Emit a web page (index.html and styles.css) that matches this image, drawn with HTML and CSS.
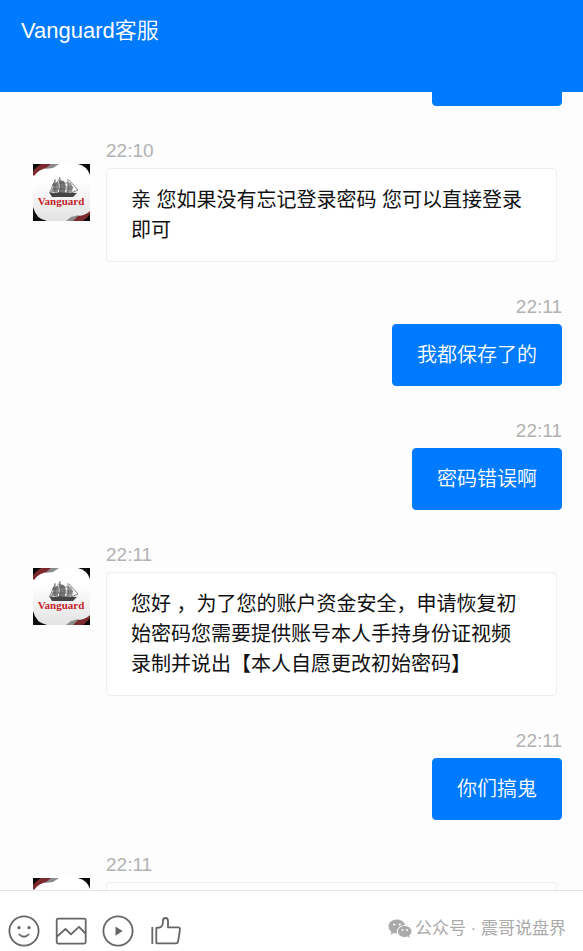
FILE: index.html
```html
<!DOCTYPE html>
<html lang="zh-CN">
<head>
  <meta charset="UTF-8" />
  <meta name="viewport" content="width=device-width, initial-scale=1" />
  <title>Vanguard客服</title>
  <link rel="stylesheet" href="styles.css">
</head>
<body>
  <!-- shared avatar -->
  <svg class="defs" aria-hidden="true">
    <defs>
      <linearGradient id="shade" x1="0" y1="0" x2="0" y2="1">
        <stop offset="0.3" stop-color="#fff" />
        <stop offset="1" stop-color="#e2e2e2" />
      </linearGradient>
    </defs>
    <symbol id="avatar" viewBox="0 0 57 57">
      <rect width="57" height="57" fill="#0a0a0a" />
      <path d="M0 0H45Q54 2 57 11V57H14Q3 55 0 43Z" fill="url(#shade)" />
      <path d="M0 0H12L0 9Z" fill="#0a0a0a" />
      <path d="M0 11V7Q3 3 8 0H19L14 4Q6 5 1 12Z" fill="#7d2a2f" />
      <path d="M18 0H26L20 4 12 5Z" fill="#8b8b8b" />
      <path d="M57 57H47L57 49Z" fill="#0a0a0a" />
      <path d="M57 47V50Q54 54 50 57H39L44 52Q51 52 56 48Z" fill="#7d2a2f" />
      <path d="M40 57H33L38 53 46 51Z" fill="#8b8b8b" />
      <path d="M16 28L21 29 27 28 44 29 40 33H19Z" fill="#444" />
      <path d="M20 19L25 18 26 23 25 28 18 28 20 24Z" fill="#8a8a8a" />
      <path d="M26 16L31 17 33 22 32 28 26 28 27 22Z" fill="#777" />
      <path d="M34 18L38 19 40 24 39 28 33 28 35 23Z" fill="#999" />
      <path d="M22 15V30M27 13V30M35 15V30M36 16L45 26 38 29M22 16L17 28M27 14L23 20M19 21H26M25 19H34M33 23H40M19 25H39" fill="none" stroke="#555" stroke-width="0.7" />
    </symbol>
  </svg>

  <header class="header">
    <h1>Vanguard客服</h1>
  </header>

  <main class="chat">
    <div class="message sent">
      <div class="bubble short"></div>
    </div>

    <div class="message received">
      <svg class="avatar" viewBox="0 0 57 57">
        <use href="#avatar" />
        <text class="avatar-name" x="28" y="41" text-anchor="middle">Vanguard</text>
      </svg>
      <div class="content">
        <time class="time">22:10</time>
        <div class="bubble">亲 您如果没有忘记登录密码 您可以直接登录即可</div>
      </div>
    </div>

    <div class="message sent">
      <time class="time">22:11</time>
      <div class="bubble">我都保存了的</div>
    </div>

    <div class="message sent">
      <time class="time">22:11</time>
      <div class="bubble">密码错误啊</div>
    </div>

    <div class="message received">
      <svg class="avatar" viewBox="0 0 57 57">
        <use href="#avatar" />
        <text class="avatar-name" x="28" y="41" text-anchor="middle">Vanguard</text>
      </svg>
      <div class="content">
        <time class="time">22:11</time>
        <div class="bubble">您好 ，为了您的账户资金安全，申请恢复初始密码您需要提供账号本人手持身份证视频录制并说出【本人自愿更改初始密码】</div>
      </div>
    </div>

    <div class="message sent">
      <time class="time">22:11</time>
      <div class="bubble">你们搞鬼</div>
    </div>

    <div class="message received">
      <svg class="avatar" viewBox="0 0 57 57">
        <use href="#avatar" />
      </svg>
      <div class="content">
        <time class="time">22:11</time>
        <div class="bubble"></div>
      </div>
    </div>
  </main>

  <footer class="toolbar">
    <div class="tools">
      <button class="tool" type="button" aria-label="表情">
        <svg viewBox="0 0 32 32">
          <circle cx="16" cy="16" r="14.6" />
          <path d="M10.8 19Q16 24.5 21.2 19" />
          <circle class="solid" cx="11" cy="12.7" r="1.6" />
          <circle class="solid" cx="21" cy="12.7" r="1.6" />
        </svg>
      </button>
      <button class="tool" type="button" aria-label="图片">
        <svg viewBox="0 0 32 32">
          <rect x="1.7" y="3.6" width="29" height="25" rx="1.5" />
          <path d="M2 21.5L10.5 14 16 19.3 24 11.8 30.5 18.5" />
        </svg>
      </button>
      <button class="tool" type="button" aria-label="视频">
        <svg viewBox="0 0 32 32">
          <circle cx="16" cy="16" r="14.6" />
          <path class="solid" d="M13.5 11.4V20.8L20.6 16.1Z" />
        </svg>
      </button>
      <button class="tool" type="button" aria-label="点赞">
        <svg viewBox="0 0 32 32">
          <path d="M3.3 12V29M7.3 12.8V28.3H27Q28.8 28.3 29.1 26.5L31 14.5Q31 12.3 29 12.3H19V5.6Q19 3 16.5 3 14 3 14 5.6 14 12.3 10.5 12.5Z" />
        </svg>
      </button>
    </div>
    <div class="account">
      <svg class="wechat" viewBox="0 0 24 19" aria-hidden="true">
        <path d="M9 0.5C4 0.5 0.5 3.6 0.5 7.5 0.5 9.8 1.7 11.5 3.4 12.8L2.7 15.5 5.8 14Q7.3 14.4 9 14.4C8 9.5 12 6 17.2 6.2 16.5 2.8 13 0.5 9 0.5Z" />
        <path d="M16.7 7C12.8 7 10 9.4 10 12.5 10 15.6 12.8 18 16.7 18Q18 18 19.3 17.6L21.7 18.8 21.1 16.7C22.6 15.6 23.5 14.2 23.5 12.5 23.5 9.4 20.6 7 16.7 7Z" />
        <g fill="#fff">
          <circle cx="6.2" cy="5.5" r="1.1" />
          <circle cx="11.8" cy="5.5" r="1.1" />
          <circle cx="14.5" cy="11" r="0.9" />
          <circle cx="19" cy="11" r="0.9" />
        </g>
      </svg>
      <span>公众号 · 震哥说盘界</span>
    </div>
  </footer>
</body>
</html>
```
FILE: styles.css
```css
* {
  box-sizing: border-box;
}

body {
  margin: 0;
  height: 100vh;
  display: flex;
  flex-direction: column;
  overflow: hidden;
  background-color: #fdfdfd;
  color: #111;
  font-family: "Liberation Sans", "Noto Sans CJK SC", sans-serif;
}

.defs {
  position: absolute;
  width: 0;
  height: 0;
}

.header {
  position: relative;
  z-index: 1;
  flex: none;
  padding: 16px 21px 46px;
  background-color: #007aff;
}

.header h1 {
  margin: 0;
  color: #fff;
  font-size: 22px;
  font-weight: 350;
  line-height: 30px;
}

/* scrolled so the oldest bubble slides under the header */
.chat {
  flex: 1;
  min-height: 0;
  margin-top: -48px;
  padding: 0 21px 0 33px;
  display: flex;
  flex-direction: column;
  gap: 33px;
  overflow: hidden;
}

.message {
  flex: none;
  display: flex;
}

.sent {
  flex-direction: column;
  align-items: flex-end;
}

.received {
  gap: 16px;
  padding-right: 5px;
}

.avatar {
  flex: none;
  width: 57px;
  height: 57px;
  margin-top: 25px;
}

.avatar-name {
  fill: #c4242b;
  font-family: "Liberation Serif", serif;
  font-size: 11px;
  font-weight: bold;
}

.content {
  flex: 1;
}

.time {
  display: block;
  margin-bottom: 5px;
  color: #b2b2b2;
  font-size: 19px;
  line-height: 24px;
}

.bubble {
  min-height: 62px;
  padding: 16px 28px 16px 24px;
  border: 1px solid #eee;
  border-radius: 4px;
  background-color: #fff;
  font-size: 20px;
  line-height: 30px;
}

.sent .bubble {
  padding: 15px 24px;
  border-color: #007aff;
  background-color: #007aff;
  color: #fff;
  font-weight: 350;
}

.sent .short {
  width: 130px;
}

.toolbar {
  flex: none;
  display: flex;
  justify-content: space-between;
  padding: 24px 17px 4px 8px;
  border-top: 1px solid #e6e6e6;
  background-color: #fff;
}

.tools {
  display: flex;
  gap: 15px;
}

.tool {
  width: 32px;
  height: 32px;
  padding: 0;
  border: none;
  background: none;
  cursor: pointer;
}

.tool svg {
  display: block;
  fill: none;
  stroke: #666;
  stroke-width: 1.8;
  stroke-linejoin: round;
}

.tool .solid {
  fill: #666;
  stroke: none;
}

.account {
  display: flex;
  align-items: center;
  gap: 3px;
  height: 27px;
  color: #aaa;
  font-size: 17px;
  line-height: 24px;
}

.wechat {
  width: 24px;
  height: 19px;
  fill: #aaa;
}
```
